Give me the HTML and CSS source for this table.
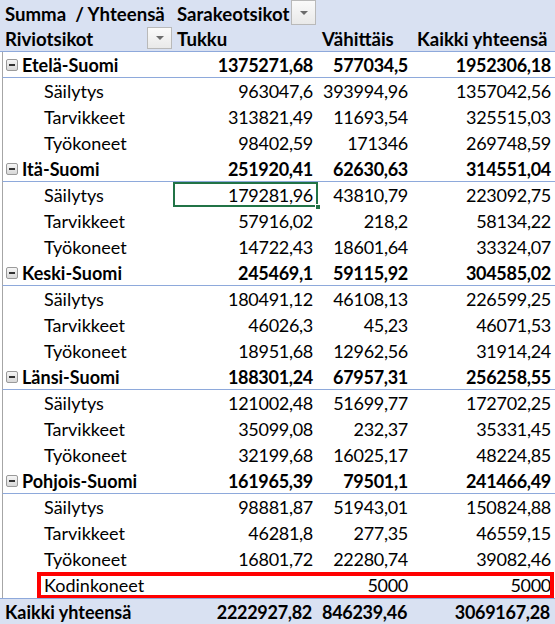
FILE: index.html
```html
<!DOCTYPE html>
<html>
<head>
<meta charset="utf-8">
<link rel="stylesheet" href="styles.css">
</head>
<body>
<div class="pivot">
  <div class="row head">
    <div class="c a">Summa&nbsp; / Yhteensä</div>
    <div class="c b flexcell"><span>Sarakeotsikot</span><span class="dd dd1"><i></i></span></div>
    <div class="c"></div>
    <div class="c"></div>
  </div>
  <div class="row head hb">
    <div class="c a flexcell"><span>Riviotsikot</span><span class="dd dd2"><i></i></span></div>
    <div class="c b">Tukku</div>
    <div class="c l">Vähittäis</div>
    <div class="c l">Kaikki yhteensä</div>
  </div>

  <div class="row grp"><div class="c a"><span class="mx"></span>Etelä-Suomi</div><div class="c n">1375271,68</div><div class="c n">577034,5</div><div class="c n">1952306,18</div></div>
  <div class="row sub"><div class="c a">Säilytys</div><div class="c n">963047,6</div><div class="c n">393994,96</div><div class="c n">1357042,56</div></div>
  <div class="row sub"><div class="c a">Tarvikkeet</div><div class="c n">313821,49</div><div class="c n">11693,54</div><div class="c n">325515,03</div></div>
  <div class="row sub"><div class="c a">Työkoneet</div><div class="c n">98402,59</div><div class="c n">171346</div><div class="c n">269748,59</div></div>

  <div class="row grp"><div class="c a"><span class="mx"></span>Itä-Suomi</div><div class="c n">251920,41</div><div class="c n">62630,63</div><div class="c n">314551,04</div></div>
  <div class="row sub"><div class="c a">Säilytys</div><div class="c n sel">179281,96<span class="handle"></span></div><div class="c n">43810,79</div><div class="c n">223092,75</div></div>
  <div class="row sub"><div class="c a">Tarvikkeet</div><div class="c n">57916,02</div><div class="c n">218,2</div><div class="c n">58134,22</div></div>
  <div class="row sub"><div class="c a">Työkoneet</div><div class="c n">14722,43</div><div class="c n">18601,64</div><div class="c n">33324,07</div></div>

  <div class="row grp"><div class="c a"><span class="mx"></span>Keski-Suomi</div><div class="c n">245469,1</div><div class="c n">59115,92</div><div class="c n">304585,02</div></div>
  <div class="row sub"><div class="c a">Säilytys</div><div class="c n">180491,12</div><div class="c n">46108,13</div><div class="c n">226599,25</div></div>
  <div class="row sub"><div class="c a">Tarvikkeet</div><div class="c n">46026,3</div><div class="c n">45,23</div><div class="c n">46071,53</div></div>
  <div class="row sub"><div class="c a">Työkoneet</div><div class="c n">18951,68</div><div class="c n">12962,56</div><div class="c n">31914,24</div></div>

  <div class="row grp"><div class="c a"><span class="mx"></span>Länsi-Suomi</div><div class="c n">188301,24</div><div class="c n">67957,31</div><div class="c n">256258,55</div></div>
  <div class="row sub"><div class="c a">Säilytys</div><div class="c n">121002,48</div><div class="c n">51699,77</div><div class="c n">172702,25</div></div>
  <div class="row sub"><div class="c a">Tarvikkeet</div><div class="c n">35099,08</div><div class="c n">232,37</div><div class="c n">35331,45</div></div>
  <div class="row sub"><div class="c a">Työkoneet</div><div class="c n">32199,68</div><div class="c n">16025,17</div><div class="c n">48224,85</div></div>

  <div class="row grp"><div class="c a"><span class="mx"></span>Pohjois-Suomi</div><div class="c n">161965,39</div><div class="c n">79501,1</div><div class="c n">241466,49</div></div>
  <div class="row sub"><div class="c a">Säilytys</div><div class="c n">98881,87</div><div class="c n">51943,01</div><div class="c n">150824,88</div></div>
  <div class="row sub"><div class="c a">Tarvikkeet</div><div class="c n">46281,8</div><div class="c n">277,35</div><div class="c n">46559,15</div></div>
  <div class="row sub"><div class="c a">Työkoneet</div><div class="c n">16801,72</div><div class="c n">22280,74</div><div class="c n">39082,46</div></div>
  <div class="row sub hl"><div class="c a">Kodinkoneet</div><div class="c n"></div><div class="c n">5000</div><div class="c n">5000</div><span class="redbox"></span></div>

  <div class="row total"><div class="c a">Kaikki yhteensä</div><div class="c n">2222927,82</div><div class="c n">846239,46</div><div class="c n">3069167,28</div></div>
</div>
</body>
</html>
```
FILE: styles.css
```css
* { box-sizing: border-box; }
html, body { margin: 0; padding: 0; background: #fff; }
body {
  font-family: Lato, "Liberation Sans", sans-serif;
  font-size: 18px;
  color: #000;
  width: 555px;
  height: 624px;
  overflow: hidden;
}
.pivot {
  display: flex;
  flex-direction: column;
}
.row {
  display: grid;
  grid-template-columns: 172px 145px 95px 143px;
  height: 26px;
  position: relative;
}
.c {
  height: 26px;
  line-height: 26px;
  padding: 1px 4px 0 5px;
  white-space: nowrap;
}
.n { text-align: right; padding-right: 5px; letter-spacing: -0.3px; }
.head { background: #d9e1f2; font-weight: bold; font-size: 18.6px; }
.head .l { padding-left: 5px; }
.head .b { padding-left: 5px; }
.hb { border-bottom: 1px solid #8ea9db; }
.hb .c { line-height: 25px; height: 25px; }
.flexcell {
  display: flex;
  align-items: flex-start;
  justify-content: space-between;
  padding-right: 0;
}
.head .dd1 { width: 25px; height: 25px; margin-right: 1px; margin-top: -1px; }
.dd {
  display: flex;
  align-items: center;
  justify-content: center;
  border: 1px solid #b9b9b9;
  background: linear-gradient(#fafafa, #e9e9e9);
  flex: none;
}
.dd2 { width: 25px; height: 22px; margin-top: 0; }
.dd i {
  width: 0; height: 0;
  border-left: 4px solid transparent;
  border-right: 4px solid transparent;
  border-top: 4px solid #6b6b6b;
}
.grp, .sub {
  border-left: 1px solid #a6a6a6;
  margin-left: 2px;
  grid-template-columns: 170px 145px 95px 143px;
}
.grp { font-weight: bold; border-bottom: 1px solid #8ea9db; }
.grp .c, .sub .c { height: 25px; line-height: 25px; }
.grp .c { line-height: 24px; }
.grp .a { padding-left: 3px; display: flex; align-items: center; }
.sub .a { padding-left: 41px; }
.mx {
  display: inline-flex;
  width: 12px; height: 12px;
  border: 1px solid #9a9a9a;
  border-radius: 2px;
  background: linear-gradient(#f6f6f6, #d8d8d8);
  margin-right: 4px;
  position: relative;
  flex: none;
}
.mx::after {
  content: "";
  position: absolute;
  left: 2px; right: 2px; top: 4px;
  height: 2px;
  background: #333;
}
.sel {
  position: relative;
  outline: 2px solid #217346;
  outline-offset: -2px;
}
.handle {
  position: absolute;
  right: -3px; bottom: -3px;
  width: 6px; height: 6px;
  background: #217346;
  border: 1px solid #fff;
}
.redbox {
  position: absolute;
  left: 34px; top: 0;
  width: 517px; height: 27px;
  border: 4px solid #ff0000;
  pointer-events: none;
}
.total {
  background: #d9e1f2;
  font-weight: bold;
  border-top: 1px solid #8ea9db;
}
.total .c { height: 25px; line-height: 25px; }
```
